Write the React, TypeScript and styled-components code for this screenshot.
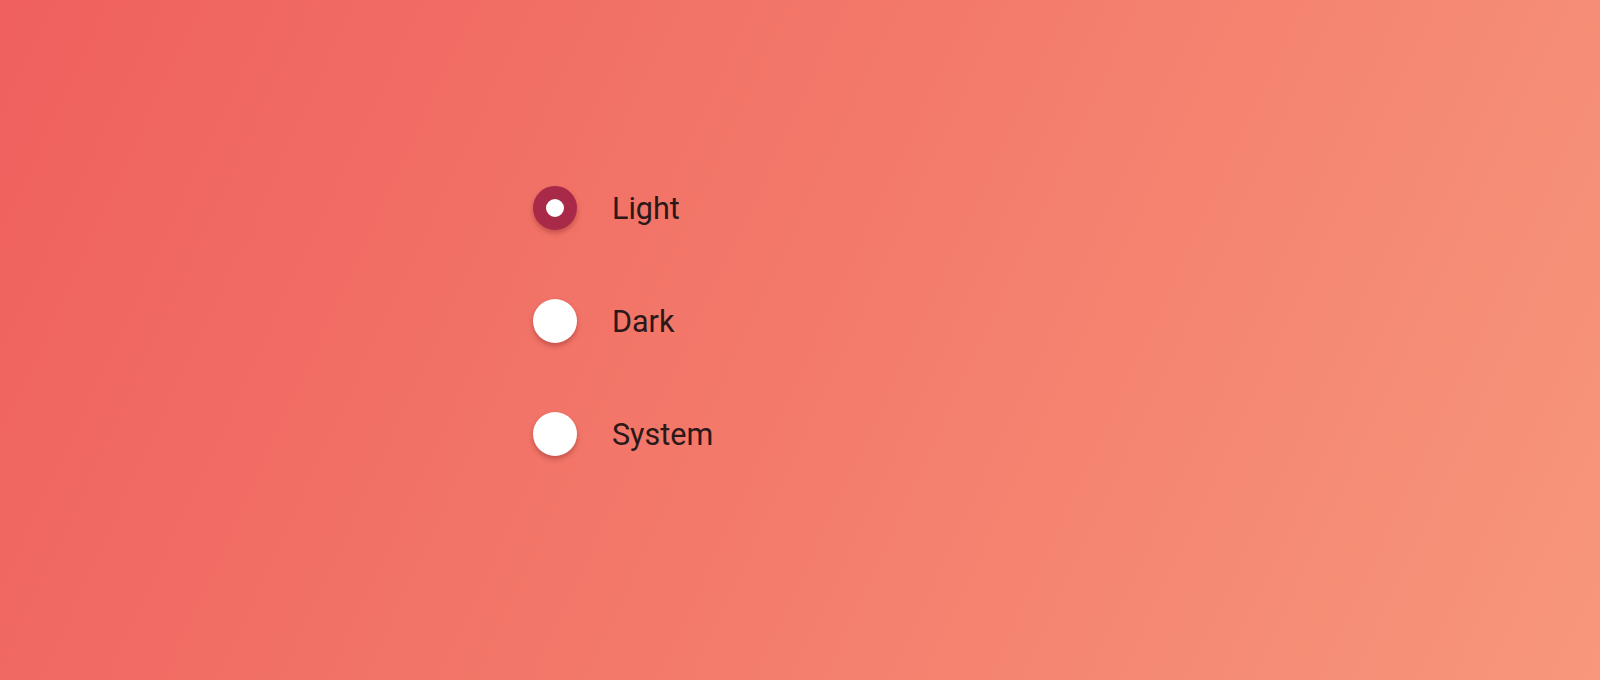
import React, { useState } from "react";
import styled, { createGlobalStyle } from "styled-components";

const Global = createGlobalStyle`
  html, body { margin: 0; padding: 0; }
  body { font-family: Roboto, "Liberation Sans", sans-serif; }
`;

const Page = styled.div`
  width: 1600px;
  height: 680px;
  box-sizing: border-box;
  padding: 186px 0 0 533px;
  background: linear-gradient(115deg, #ef605e 0%, #f37a6b 50%, #f7977b 100%);
  overflow: hidden;
`;

const Group = styled.div`
  display: flex;
  flex-direction: column;
  gap: 69px;
`;

const Option = styled.label`
  display: flex;
  align-items: center;
  gap: 35px;
  height: 44px;
  cursor: pointer;
`;

const Dot = styled.span<{ $checked: boolean }>`
  width: 44px;
  height: 44px;
  border-radius: 50%;
  box-sizing: border-box;
  background: #ffffff;
  border: ${(p) => (p.$checked ? "13.5px solid #a82a48" : "0 solid transparent")};
  box-shadow: 0 3px 5px rgba(110, 20, 20, 0.35);
  flex: none;
`;

const Text = styled.span`
  font-size: 30.5px;
  color: #2b1818;
  line-height: 1;
  padding-top: 2px;
`;

const options = ["Light", "Dark", "System"];

export default function App() {
  const [value, setValue] = useState("Light");
  return (
    <>
      <Global />
      <Page>
        <Group role="radiogroup">
          {options.map((o) => (
            <Option key={o} onClick={() => setValue(o)}>
              <Dot $checked={value === o} />
              <Text>{o}</Text>
            </Option>
          ))}
        </Group>
      </Page>
    </>
  );
}
